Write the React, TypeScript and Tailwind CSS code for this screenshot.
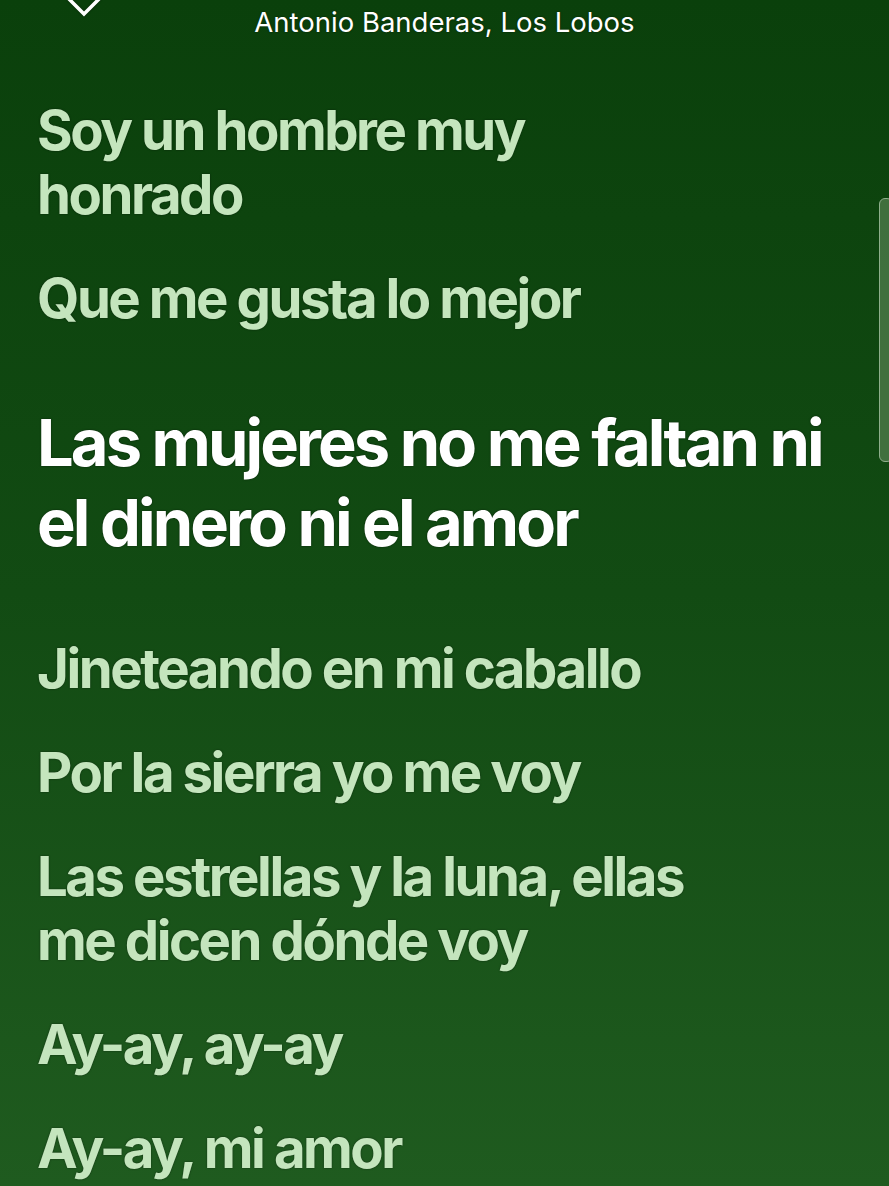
const lines = [
  { text: ['Soy un hombre muy', 'honrado'] },
  { text: ['Que me gusta lo mejor'] },
  { text: ['Las mujeres no me faltan ni', 'el dinero ni el amor'], active: true },
  { text: ['Jineteando en mi caballo'] },
  { text: ['Por la sierra yo me voy'] },
  { text: ['Las estrellas y la luna, ellas', 'me dicen dónde voy'] },
  { text: ['Ay-ay, ay-ay'] },
  { text: ['Ay-ay, mi amor'] },
];

export default function App() {
  return (
    <div className="relative h-[1186px] w-[889px] overflow-hidden bg-gradient-to-b from-[#0a400b] via-[#124b13] to-[#1f5b1f] font-['Inter',sans-serif]">
      <header className="grid h-[44px] grid-cols-[1fr_auto_1fr] items-start">
        <div className="pl-[62px]">
          <svg viewBox="0 0 44 28" className="-mt-[8px] h-[28px] w-[44px]" fill="none">
            <path
              d="M6 6 L22 22 L38 6"
              stroke="white"
              strokeWidth={3.6}
              strokeLinejoin="miter"
              style={{ filter: 'drop-shadow(0 0 1px rgba(0,0,0,0.5))' }}
            />
          </svg>
        </div>
        <p className="pt-[5px] text-[27.5px] leading-[34px] text-white [text-shadow:0_0_2px_rgba(0,0,0,0.5)]">
          Antonio Banderas, Los Lobos
        </p>
        <div />
      </header>

      <main className="flex flex-col gap-10 px-[37px] pt-[54px]">
        {lines.map((line, i) => (
          <p
            key={i}
            className={
              line.active
                ? 'my-[33px] text-[65px] font-bold leading-[80px] tracking-[-0.045em] text-white [text-shadow:0_0_2px_rgba(0,0,0,0.6)]'
                : 'text-[54.5px] font-bold leading-[64px] tracking-[-0.045em] text-[#c4e5bd] [text-shadow:0_0_2px_rgba(0,0,0,0.55)]'
            }
          >
            {line.text.map((t, j) => (
              <span key={j} className="block">
                {t}
              </span>
            ))}
          </p>
        ))}
      </main>

      <div className="absolute right-[-4px] top-[198px] h-[264px] w-[14px] rounded-[6px] border border-[#8fae8c] bg-[#4d7a4a]/80" />
    </div>
  );
}
